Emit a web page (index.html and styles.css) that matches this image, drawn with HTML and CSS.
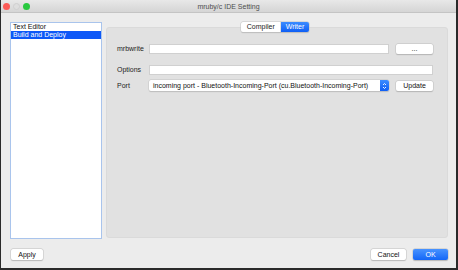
FILE: index.html
```html
<!DOCTYPE html>
<html lang="en">
<head>
    <meta charset="UTF-8">
    <title>mruby/c IDE Setting</title>
    <link rel="stylesheet" href="styles.css">
</head>
<body>

    <div class="window">
        <div class="titlebar">
            <div class="lights">
                <span class="light red"></span>
                <span class="light yellow"></span>
                <span class="light green"></span>
            </div>
            <div class="title">mruby/c IDE Setting</div>
        </div>

        <div class="main">
            <ul class="sidebar">
                <li>Text Editor</li>
                <li class="selected">Build and Deploy</li>
            </ul>

            <div class="tabview">
                <div class="tabs">
                    <span class="tab">Compiler</span>
                    <span class="tab active">Writer</span>
                </div>
                <div class="panel">
                    <div class="row first">
                        <label>mrbwrite</label>
                        <input type="text" class="field">
                        <button class="btn small">...</button>
                    </div>
                    <div class="row options">
                        <label>Options</label>
                        <input type="text" class="field">
                    </div>
                    <div class="row port">
                        <label>Port</label>
                        <div class="select">
                            <span class="select-text">incoming port - Bluetooth-Incoming-Port (cu.Bluetooth-Incoming-Port)</span>
                            <span class="stepper">
                                <svg width="5" height="8" viewBox="0 0 5 8">
                                    <path d="M1 3 L2.5 1.5 L4 3 M1 5 L2.5 6.5 L4 5" fill="none" stroke="#fff" stroke-width="0.9"/>
                                </svg>
                            </span>
                        </div>
                        <button class="btn small">Update</button>
                    </div>
                </div>
            </div>
        </div>

        <div class="footer">
            <button class="btn apply">Apply</button>
            <div class="spacer"></div>
            <button class="btn dialog">Cancel</button>
            <button class="btn dialog primary">OK</button>
        </div>
    </div>

</body>
</html>
```

FILE: styles.css
```css
/* Window */
body {
    margin: 0;
    font-family: 'Liberation Sans', Arial, sans-serif;
    font-size: 7px;
    color: #222;
}

.window {
    width: 458px;
    height: 270px;
    box-sizing: border-box;
    background: #ececec;
    border-left: 1px solid #2a2a2a;
    border-right: 2px solid #2a2a2a;
    border-bottom: 2px solid #2a2a2a;
    display: flex;
    flex-direction: column;
}

.titlebar {
    height: 12px;
    border-bottom: 1px solid #c4c4c4;
    background: linear-gradient(#e8e8e8, #d5d5d5);
    display: flex;
    align-items: center;
    position: relative;
}

.lights {
    display: flex;
    gap: 3px;
    padding-left: 2px;
}

.light {
    width: 7px;
    height: 7px;
    border-radius: 50%;
}

.red { background: #fc5b57; }
.yellow { background: #dedede; border: 0.5px solid #cfcfcf; box-sizing: border-box; }
.green { background: #2ac940; }

.title {
    position: absolute;
    left: 0;
    right: 0;
    text-align: center;
    color: #4d4d4d;
    font-size: 7px;
}

/* Main area */
.main {
    display: flex;
    padding: 9px 0 0 9px;
    gap: 4px;
}

.sidebar {
    list-style: none;
    margin: 0;
    padding: 0;
    width: 92px;
    height: 217px;
    box-sizing: border-box;
    background: #fff;
    border: 1px solid #a9c4ec;
}

.sidebar li {
    height: 8px;
    line-height: 8px;
    padding-left: 2px;
    color: #111;
}

.sidebar li.selected {
    background: #0d58f7;
    color: #fff;
}

.tabview {
    width: 342px;
    display: flex;
    flex-direction: column;
}

.tabs {
    display: flex;
    justify-content: center;
    height: 10px;
    margin-bottom: -5px;
    position: relative;
    z-index: 1;
    padding-right: 4px;
}

.tab {
    height: 10px;
    line-height: 10px;
    padding: 0 6px;
    background: #fff;
    border-radius: 2px 0 0 2px;
    box-shadow: 0 0 0 0.5px #c8c8c8, 0 0.5px 1px rgba(0, 0, 0, 0.2);
}

.tab.active {
    background: linear-gradient(#3c8cff, #0f5ff5);
    color: #fff;
    border-radius: 0 2px 2px 0;
    padding: 0 5px;
}

.panel {
    height: 211px;
    box-sizing: border-box;
    background: #e1e1e1;
    border: 1px solid #dadada;
    border-radius: 3px;
    padding: 15px 14px 0 10px;
}

/* Form rows */
.row {
    display: flex;
    align-items: center;
    gap: 7px;
    height: 11px;
}

.row label {
    width: 25px;
    color: #222;
}

.row.options {
    margin-top: 10px;
}

.row.port {
    margin-top: 5px;
}

.field {
    flex: 1;
    height: 10px;
    box-sizing: border-box;
    margin: 0;
    padding: 0;
    border: 1px solid #d0d0d0;
    background: #fff;
    outline: none;
}

.select {
    flex: 1;
    height: 11px;
    box-sizing: border-box;
    display: flex;
    align-items: center;
    background: #fff;
    border-radius: 2px;
    box-shadow: 0 0 0 0.5px #c8c8c8, 0 0.5px 1px rgba(0, 0, 0, 0.2);
    overflow: hidden;
}

.select-text {
    flex: 1;
    padding-left: 4px;
    white-space: nowrap;
    color: #111;
}

.stepper {
    width: 9px;
    height: 11px;
    background: linear-gradient(#3c8cff, #0f5ff5);
    display: flex;
    align-items: center;
    justify-content: center;
}

/* Buttons */
.btn {
    font-family: 'Liberation Sans', Arial, sans-serif;
    font-size: 7px;
    color: #111;
    background: #fff;
    border: none;
    border-radius: 2px;
    box-shadow: 0 0 0 0.5px #c4c4c4, 0 0.5px 1px rgba(0, 0, 0, 0.25);
    padding: 0;
    height: 10px;
    line-height: 10px;
}

.btn.small {
    width: 37px;
}

.footer {
    display: flex;
    align-items: center;
    gap: 7px;
    padding: 10px 8px 0 10px;
}

.spacer {
    flex: 1;
}

.btn.apply {
    width: 32px;
    height: 11px;
}

.btn.dialog {
    width: 35px;
    height: 11px;
}

.btn.primary {
    background: linear-gradient(#4893ff, #1366f7);
    color: #fff;
}
```
